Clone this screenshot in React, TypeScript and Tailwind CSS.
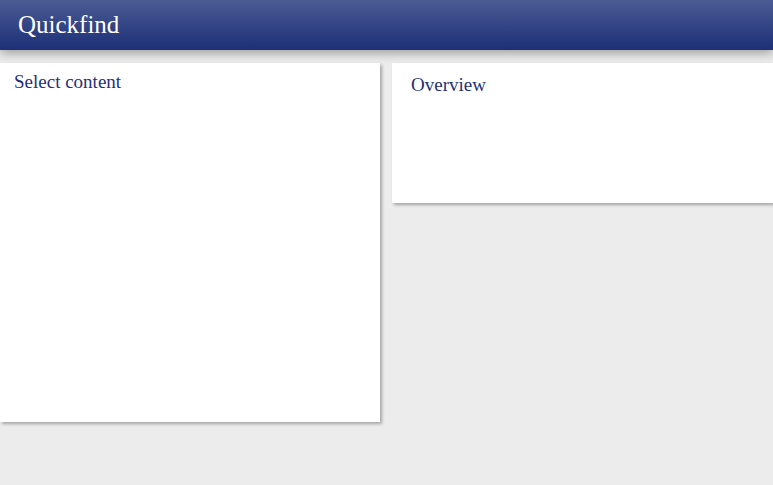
const serif = "font-['Liberation_Serif','DejaVu_Serif',serif]";

const Panel = ({ title, className }: { title: string; className: string }) => (
  <div className={`bg-white shadow-[2px_2px_3px_rgba(0,0,0,0.3)] ${className}`}>
    <h2 className={`${serif} text-[19px] leading-none text-[#1f3078]`}>{title}</h2>
  </div>
);

export default function App() {
  return (
    <div className="min-h-[485px] bg-[#ececec] overflow-hidden">
      <header className="h-[50px] bg-gradient-to-b from-[#4b5b94] to-[#1d2f76] flex items-center px-[18px] shadow-[0_3px_10px_rgba(0,0,0,0.35)] relative">
        <h1 className={`${serif} text-[25px] text-white leading-none -mt-[2px]`}>Quickfind</h1>
      </header>
      <div className="flex gap-3 pt-[13px]">
        <Panel title="Select content" className="w-[380px] h-[359px] pl-[14px] pt-[9px]" />
        <Panel title="Overview" className="flex-1 h-[140px] pl-[19px] pt-[12px]" />
      </div>
    </div>
  );
}
